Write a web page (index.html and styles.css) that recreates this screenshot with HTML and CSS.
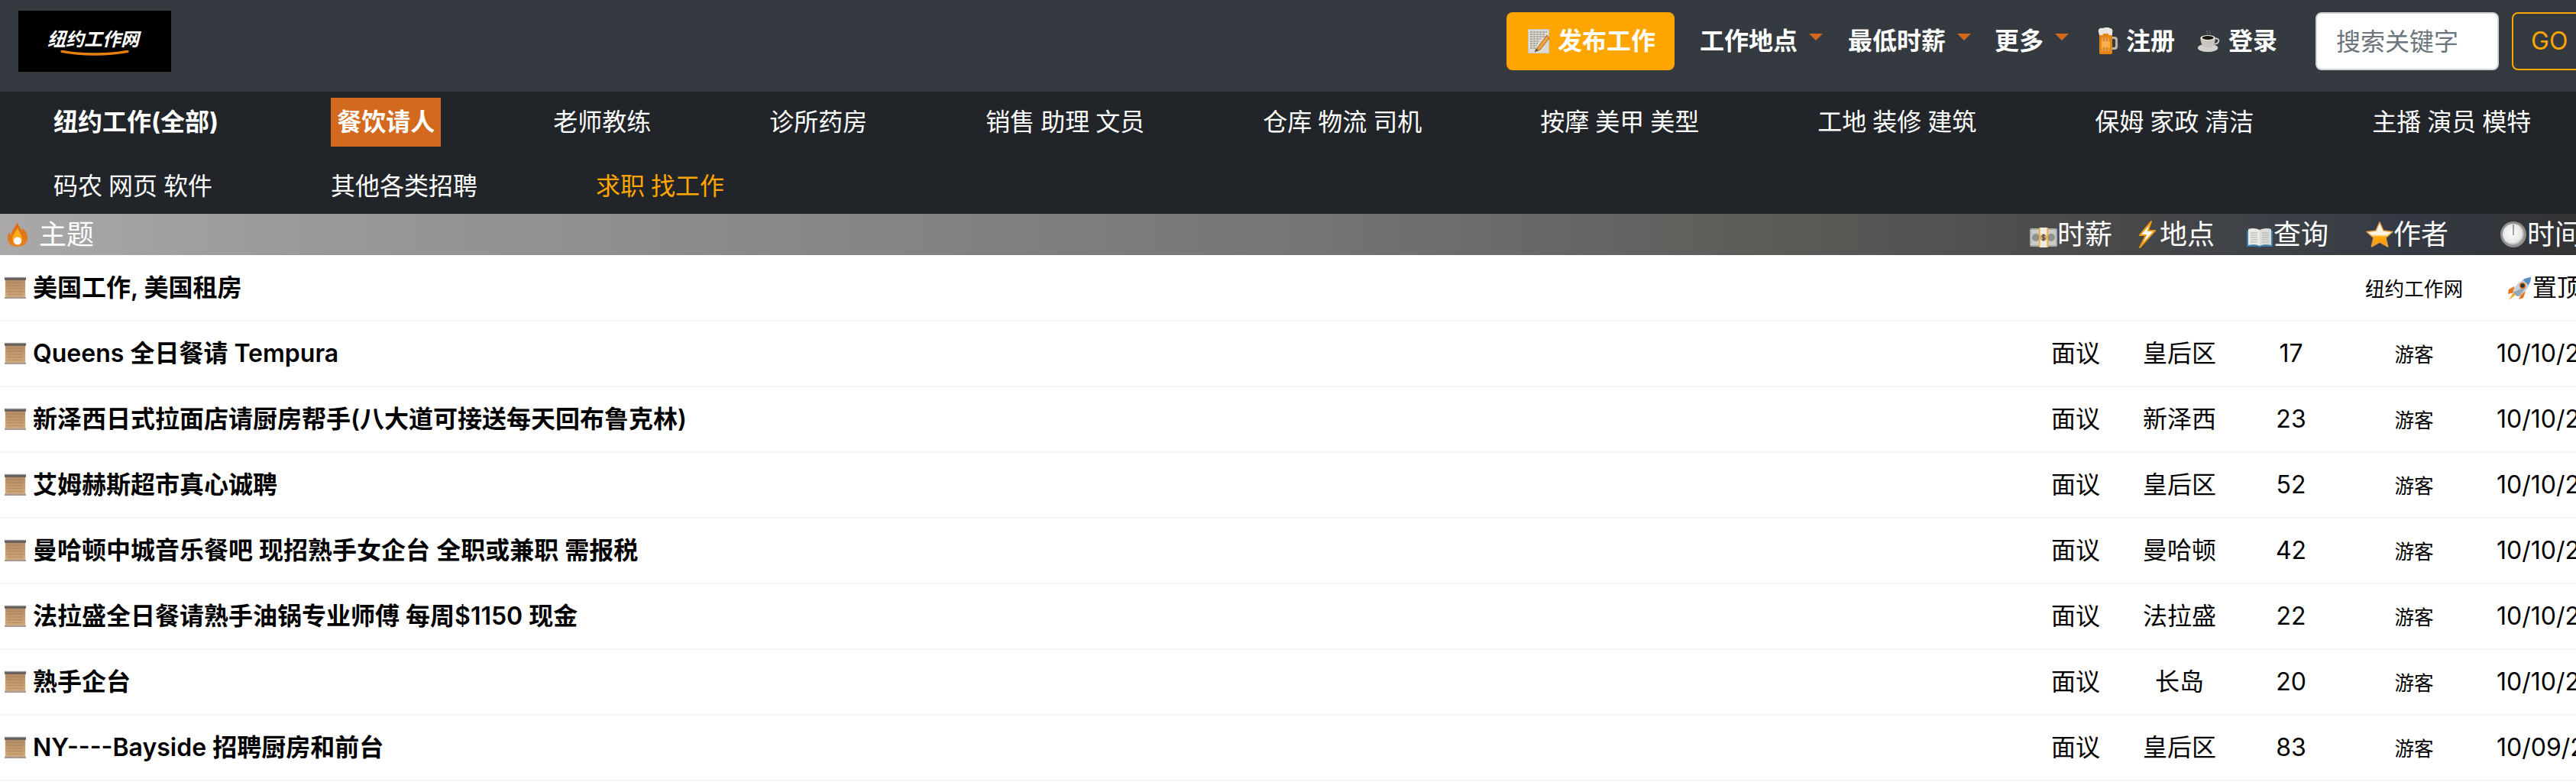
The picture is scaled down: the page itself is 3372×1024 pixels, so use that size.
FILE: index.html
```html
<!DOCTYPE html>
<html lang="zh-CN">
<head>
<meta charset="utf-8">
<title>纽约工作网</title>
<link rel="stylesheet" href="styles.css">
</head>
<body>
<svg class="sprite" aria-hidden="true">
  <defs>
    <linearGradient id="g-scroll" x1="0" y1="0" x2="0" y2="1"><stop offset="0" stop-color="#b08a62"/><stop offset="1" stop-color="#d3ab7c"/></linearGradient>
    <linearGradient id="g-flame" x1="0" y1="0" x2="0" y2="1"><stop offset="0" stop-color="#d96a12"/><stop offset="1" stop-color="#e8831f"/></linearGradient>
    <linearGradient id="g-star" x1="0" y1="0" x2="0" y2="1"><stop offset="0" stop-color="#fffdf7"/><stop offset=".5" stop-color="#fdf3df"/><stop offset=".6" stop-color="#ffa70f"/><stop offset="1" stop-color="#ff9a00"/></linearGradient>
    <radialGradient id="g-clock" cx=".45" cy=".45" r=".6"><stop offset="0" stop-color="#fff"/><stop offset=".72" stop-color="#e6e6e6"/><stop offset="1" stop-color="#8a8a8a"/></radialGradient>
    <symbol id="i-scroll" viewBox="0 0 32 32">
      <rect x="2" y="3" width="28" height="27" fill="url(#g-scroll)"/>
      <rect x="1" y="1" width="30" height="4" fill="#5e5a58"/>
      <rect x="1" y="1" width="30" height="1.4" fill="#9a9694"/>
      <rect x="1" y="28.6" width="30" height="2.400" fill="#a79c90"/>
      <path d="M5 9h22M5 13h21M6 17h21M5 21h22M6 25h20" stroke="#a07c58" stroke-width="1" stroke-dasharray="2 1"/>
    </symbol>
    <symbol id="i-flame" viewBox="0 0 32 36">
      <path d="M16 1c1 6 5 8 6 12 1-1 1-3 1-4 4 4 7 9 7 14 0 8-6 12-14 12S2 31 2 23c0-3 1-6 3-8 0 2 1 3 2 4 0-7 6-11 9-18z" fill="url(#g-flame)"/>
      <path d="M16 9c1 5 6 8 6 15 0 5-3 8-6 8s-7-3-7-8c0-6 5-9 7-15z" fill="#ffae1a"/>
      <circle cx="16" cy="27" r="5.5" fill="#fff"/>
    </symbol>
    <symbol id="i-money" viewBox="0 0 36 28">
      <rect x="0" y="2" width="36" height="24" rx="2" fill="#a9aca8"/>
      <rect x="2" y="4" width="32" height="20" fill="#c8cbc6"/>
      <circle cx="8" cy="14" r="5" fill="#8f928e"/>
      <circle cx="28" cy="14" r="5" fill="#8f928e"/>
      <rect x="12" y="1" width="12" height="26" fill="#ffa214"/>
      <rect x="13.500" y="1" width="9" height="26" fill="#ecebe6"/>
      <circle cx="18" cy="14" r="4.500" fill="#bfa777"/>
      <path d="M20 11.500c-2-1.400-4-.6-4 .8 0 2.400 4 1 4 3.400 0 1.400-2.200 1.800-4 .8M18 9.500v9" fill="none" stroke="#4b3b20" stroke-width="1"/>
    </symbol>
    <symbol id="i-bolt" viewBox="0 0 26 36">
      <path d="M19 1 4 19h8L4 35 24 13h-9z" fill="#fff" stroke="#f39a0a" stroke-width="2" stroke-linejoin="round"/>
    </symbol>
    <symbol id="i-book" viewBox="0 0 36 28">
      <path d="M1 5h34v21H21l-3 1-3-1H1z" fill="#3c7ea8"/>
      <path d="M3 3c5-2 11-1 15 1v21c-4-2-10-2-15-1z" fill="#e9e9e6"/>
      <path d="M33 3c-5-2-11-1-15 1v21c4-2 10-2 15-1z" fill="#dcdcd8"/>
      <path d="M6 8h9M6 11h9M6 14h9M6 17h9M6 20h9M21 8h9M21 11h9M21 14h9M21 17h9M21 20h9" stroke="#aeaeaa" stroke-width="1"/>
    </symbol>
    <symbol id="i-star" viewBox="0 0 36 36">
      <path d="m18 2 5 11 12 1.500-9 8 2.700 11.500L18 28l-10.700 6L10 22.500l-9-8L13 13z" fill="url(#g-star)" stroke="#e89a3c" stroke-width="1.500" stroke-linejoin="round"/>
    </symbol>
    <symbol id="i-clock" viewBox="0 0 36 36">
      <circle cx="18" cy="18" r="17" fill="#8f8f8f"/>
      <circle cx="18" cy="18" r="14" fill="url(#g-clock)"/>
      <rect x="17.200" y="5" width="1.600" height="14" fill="#8a8a8a"/>
    </symbol>
    <symbol id="i-rocket" viewBox="0 0 32 32">
      <path d="M9 13 2 17l-1 6 8-2zM19 22l-4 8 6-2 3-9z" fill="#e8741a"/>
      <path d="M8 21l3 3-9 7z" fill="#f5a623"/>
      <path d="M31 1C22 1.500 13 8 8 17l-.5 4 5 5 4-.5C25 20 31 10 31 1z" fill="#c9d2da"/>
      <path d="M31 1c-4 .2-8 2-10.500 3.500l7 7C29.800 8 31 5 31 1z" fill="#5b8fc0"/>
      <path d="M7.500 21l5 5 4-.5L26 12z" fill="#8896a2" opacity=".7"/>
      <circle cx="20" cy="12" r="4.200" fill="#e8741a"/>
      <circle cx="20" cy="12" r="2.700" fill="#26343f"/>
    </symbol>
    <symbol id="i-memo" viewBox="0 0 28 32">
      <rect x="0" y="0" width="28" height="32" fill="#dedbd2"/>
      <rect x="0" y="0" width="28" height="32" fill="none" stroke="#b9b6ac" stroke-width="1"/>
      <path d="M3 4h22M3 7h20M3 10h22M3 13h14M3 16h12M3 19h10M3 22h9M3 25h8" stroke="#77756f" stroke-width="1" stroke-dasharray="3 1"/>
      <path d="M25 8 13 24l-4 6 7-3 12-15z" fill="#f0a33a" stroke="#a5622a" stroke-width="1"/>
      <path d="m9 30 1.500-5 3.500 3z" fill="#6a5a4a"/>
    </symbol>
    <symbol id="i-beer" viewBox="0 0 28 36">
      <path d="M3 6h17v27q0 2-2 2H5q-2 0-2-2z" fill="#e9840f"/>
      <path d="M2 6c-1-4 2-6 5-5 2-1 8-2 10 0 3 0 4 3 3 6v3H15v-2H8v2H3z" fill="#e8e6df"/>
      <path d="M20 12h3q4 0 4 4v9q0 4-4 4h-3v-3h2q2 0 2-2v-7q0-2-2-2h-2z" fill="#b8b4a8"/>
      <path d="M7 13v18M11 13v18M15 13v18" stroke="#c2d0d0" stroke-width="1.200" opacity=".7"/>
      <rect x="6" y="18" width="11" height="8" fill="#f7b04a"/>
    </symbol>
    <symbol id="i-coffee" viewBox="0 0 34 34">
      <path d="M15 1c-2 2 2 3 0 6M19 1c-2 2 2 3 0 6" fill="none" stroke="#6a6a6a" stroke-width="1.200"/>
      <ellipse cx="16" cy="27" rx="15" ry="6" fill="#d4d2cd"/>
      <path d="M5 12h22c0 8-3 15-11 15S5 20 5 12z" fill="#c9c6c0"/>
      <ellipse cx="16" cy="12" rx="11" ry="4" fill="#eeece8"/>
      <ellipse cx="16" cy="12" rx="8.500" ry="2.800" fill="#1c120c"/>
      <path d="M27 13q6 0 5 4t-7 4" fill="none" stroke="#d4d2cd" stroke-width="2"/>
    </symbol>
  </defs>
</svg>

<div class="page">
  <header class="topbar">
    <a class="logo">
      <span class="logo-text">纽约工作网</span>
      <svg class="logo-swoosh" viewBox="0 0 100 8"><path d="M1 1.500C30 7 70 7 99 1.500" fill="none" stroke="#e8800e" stroke-width="4" stroke-linecap="round"/></svg>
    </a>
    <div class="top-actions">
      <a class="post-btn"><svg class="ic-memo"><use href="#i-memo"/></svg>发布工作</a>
      <a class="menu caret m-loc">工作地点</a>
      <a class="menu caret m-pay">最低时薪</a>
      <a class="menu caret m-more">更多</a>
      <a class="menu m-reg"><svg class="ic-beer"><use href="#i-beer"/></svg>注册</a>
      <a class="menu m-login"><svg class="ic-coffee"><use href="#i-coffee"/></svg>登录</a>
      <form class="search">
        <input class="search-input" type="text" placeholder="搜索关键字">
        <button class="search-btn" type="button">GO</button>
      </form>
    </div>
  </header>

  <nav class="cats">
    <a class="cat strong">纽约工作(全部)</a>
    <a class="cat strong active">餐饮请人</a>
    <a class="cat">老师教练</a>
    <a class="cat">诊所药房</a>
    <a class="cat">销售 助理 文员</a>
    <a class="cat">仓库 物流 司机</a>
    <a class="cat">按摩 美甲 美型</a>
    <a class="cat">工地 装修 建筑</a>
    <a class="cat">保姆 家政 清洁</a>
    <a class="cat">主播 演员 模特</a>
    <a class="cat">码农 网页 软件</a>
    <a class="cat">其他各类招聘</a>
    <a class="cat seek">求职 找工作</a>
  </nav>

  <table class="list">
    <colgroup>
      <col class="c-title"><col class="c-pay"><col class="c-loc"><col class="c-views"><col class="c-author"><col class="c-time">
    </colgroup>
    <thead>
      <tr>
        <th class="th-title"><svg class="ic-flame"><use href="#i-flame"/></svg><span class="th-title-text">主题</span></th>
        <th class="th-pay"><svg class="ic-money"><use href="#i-money"/></svg>时薪</th>
        <th class="th-loc"><svg class="ic-bolt"><use href="#i-bolt"/></svg>地点</th>
        <th class="th-views"><svg class="ic-book"><use href="#i-book"/></svg>查询</th>
        <th class="th-author"><svg class="ic-star"><use href="#i-star"/></svg>作者</th>
        <th class="th-time"><svg class="ic-clock"><use href="#i-clock"/></svg>时间</th>
      </tr>
    </thead>
    <tbody>
      <tr>
        <td class="title"><svg class="ic-scroll"><use href="#i-scroll"/></svg>美国工作, 美国租房</td>
        <td></td><td></td><td></td>
        <td class="author">纽约工作网</td>
        <td class="time pinned"><svg class="ic-rocket"><use href="#i-rocket"/></svg>置顶</td>
      </tr>
      <tr>
        <td class="title"><svg class="ic-scroll"><use href="#i-scroll"/></svg>Queens 全日餐请 Tempura</td>
        <td>面议</td><td>皇后区</td><td>17</td><td class="author">游客</td><td class="time">10/10/2025</td>
      </tr>
      <tr>
        <td class="title"><svg class="ic-scroll"><use href="#i-scroll"/></svg>新泽西日式拉面店请厨房帮手(八大道可接送每天回布鲁克林)</td>
        <td>面议</td><td>新泽西</td><td>23</td><td class="author">游客</td><td class="time">10/10/2025</td>
      </tr>
      <tr>
        <td class="title"><svg class="ic-scroll"><use href="#i-scroll"/></svg>艾姆赫斯超市真心诚聘</td>
        <td>面议</td><td>皇后区</td><td>52</td><td class="author">游客</td><td class="time">10/10/2025</td>
      </tr>
      <tr>
        <td class="title"><svg class="ic-scroll"><use href="#i-scroll"/></svg>曼哈顿中城音乐餐吧 现招熟手女企台 全职或兼职 需报税</td>
        <td>面议</td><td>曼哈顿</td><td>42</td><td class="author">游客</td><td class="time">10/10/2025</td>
      </tr>
      <tr>
        <td class="title"><svg class="ic-scroll"><use href="#i-scroll"/></svg>法拉盛全日餐请熟手油锅专业师傅 每周$1150 现金</td>
        <td>面议</td><td>法拉盛</td><td>22</td><td class="author">游客</td><td class="time">10/10/2025</td>
      </tr>
      <tr>
        <td class="title"><svg class="ic-scroll"><use href="#i-scroll"/></svg>熟手企台</td>
        <td>面议</td><td>长岛</td><td>20</td><td class="author">游客</td><td class="time">10/10/2025</td>
      </tr>
      <tr>
        <td class="title"><svg class="ic-scroll"><use href="#i-scroll"/></svg>NY----Bayside 招聘厨房和前台</td>
        <td>面议</td><td>皇后区</td><td>83</td><td class="author">游客</td><td class="time">10/09/2025</td>
      </tr>
    </tbody>
  </table>
</div>
</body>
</html>
```

FILE: styles.css
```css
* { box-sizing: border-box; }
html, body { margin: 0; padding: 0; height: 100%; overflow: hidden; background: #fff; }
body {
  font-family: Inter, "Noto Sans CJK SC", "Noto Sans", sans-serif;
  font-size: 32px;
  line-height: 48px;
  color: #000;
}
.sprite { display: block; width: 0; height: 0; overflow: hidden; }
.page { width: 100%; overflow: hidden; }

/* top bar */
.topbar {
  display: flex;
  height: 120px;
  padding: 14px 0 0 24px;
  background: #343a40;
  color: #fff;
}
.logo {
  flex: none;
  width: 200px;
  height: 80px;
  background: #000;
  display: flex;
  flex-direction: column;
  align-items: center;
  padding-top: 24px;
}
.logo-text {
  font-size: 24px;
  line-height: 28px;
  font-weight: 700;
  color: #fff;
  transform: skewX(-14deg);
}
.logo-swoosh { width: 98px; height: 7px; display: block; margin-top: 0; }

.top-actions {
  flex: none;
  display: flex;
  align-items: flex-start;
  margin-left: 1748px;
  padding-top: 2px;
}
.post-btn {
  display: flex;
  align-items: center;
  width: 220px;
  height: 76px;
  padding-left: 28px;
  background: #ffa500;
  border-radius: 8px;
  color: #fff;
  font-weight: 700;
}
.ic-memo { width: 28px; height: 32px; margin-right: 11px; flex: none; }
.menu {
  display: flex;
  align-items: center;
  height: 76px;
  color: #fff;
  font-weight: 700;
  white-space: nowrap;
}
.caret::after {
  content: "";
  margin-left: 15px;
  margin-top: -12px;
  border-top: 9px solid #d2691e;
  border-left: 9px solid transparent;
  border-right: 9px solid transparent;
}
.m-loc { margin-left: 33px; }
.m-pay { margin-left: 33px; }
.m-more { margin-left: 31px; }
.m-reg { margin-left: 37px; }
.m-login { margin-left: 29px; }
.ic-beer { width: 28px; height: 36px; margin-right: 10px; flex: none; }
.ic-coffee { width: 30px; height: 32px; margin-right: 11px; flex: none; }
.search { display: flex; margin-left: 50px; flex: none; }
.search-input {
  width: 240px;
  height: 76px;
  padding: 0 25px;
  border: 2px solid #ced4da;
  border-radius: 8px;
  background: #fff;
  font: inherit;
  color: #495057;
}
.search-input::placeholder { color: #6c757d; opacity: 1; }
.search-btn {
  width: 130px;
  height: 76px;
  margin-left: 17px;
  padding: 0 0 0 23px;
  text-align: left;
  border: 2px solid #ffa500;
  border-radius: 8px;
  background: transparent;
  color: #ffa500;
  font: inherit;
  flex: none;
}

/* category nav */
.cats {
  display: flex;
  flex-wrap: wrap;
  column-gap: 139px;
  row-gap: 16px;
  height: 160px;
  padding: 8px 0 0 62px;
  background: #212529;
  word-spacing: -1px;
}
.cat {
  display: block;
  height: 64px;
  padding: 8px;
  color: #fff;
  white-space: nowrap;
}
.strong { font-weight: 700; }
.active { background: #d2691e; }
.seek { color: #ffa500; }

/* list */
.list {
  width: 3459px;
  table-layout: fixed;
  border-collapse: collapse;
}
.c-title { width: 2649px; }
.c-pay { width: 136px; }
.c-loc { width: 136px; }
.c-views { width: 156px; }
.c-author { width: 166px; }
.c-time { width: 216px; }

thead tr {
  height: 54px;
  background: linear-gradient(to right, #aaa8a9 0%, #999 12%, #838383 35%, #747474 50%, #5c5b58 67%, #4a4a4a 79%, #343a44 91%, #33302e 100%);
}
th {
  padding: 0;
  font-size: 36px;
  line-height: 54px;
  font-weight: 400;
  color: #fff;
  text-align: left;
  white-space: nowrap;
  overflow: hidden;
}
th svg { vertical-align: -5px; }
.th-title { padding-left: 8px; }
.th-title-text { margin-left: 13px; }
.th-pay { padding-left: 8px; }
.th-loc { padding-left: 12px; }
.th-views { padding-left: 19px; }
.th-author { padding-left: 20px; }
.th-time { padding-left: 29px; }
.ic-flame { width: 30px; height: 36px; }
.ic-money { width: 36px; height: 28px; margin-right: 0; }
.ic-bolt { width: 26px; height: 38px; margin-right: 4px; vertical-align: -6px; }
.ic-book { width: 36px; height: 28px; }
.ic-star { width: 36px; height: 36px; }
.ic-clock { width: 36px; height: 36px; }

tbody tr { height: 86px; border-bottom: 2px solid #f5f5f5; }
td {
  padding: 0;
  text-align: center;
  white-space: nowrap;
  vertical-align: middle;
}
.title {
  padding-left: 5px;
  text-align: left;
  font-weight: 600;
}
.ic-scroll { width: 30px; height: 32px; margin-right: 8px; vertical-align: -5px; }
.author { font-size: 25.6px; padding-top: 4px; }
.time { text-align: left; padding-left: 25px; }
.pinned { padding-left: 39px; }
.ic-rocket { width: 32px; height: 32px; margin-right: 1px; vertical-align: -6px; }
```
